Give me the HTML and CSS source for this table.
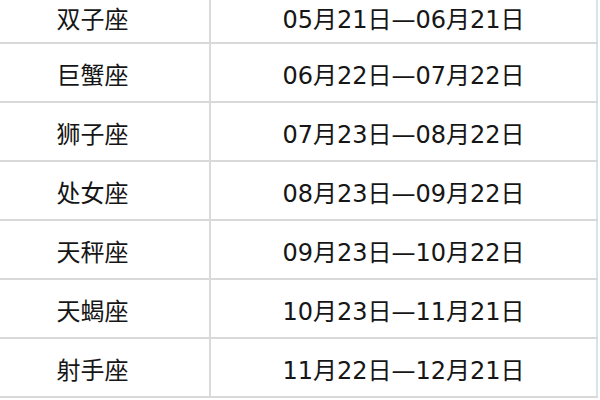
FILE: index.html
```html
<!DOCTYPE html>
<html lang="zh-CN">
<head>
<meta charset="utf-8">
<link rel="stylesheet" href="styles.css">
</head>
<body>
<div class="table">
  <div class="row first"><div class="cell name">双子座</div><div class="cell date">05月21日—06月21日</div></div>
  <div class="row"><div class="cell name">巨蟹座</div><div class="cell date">06月22日—07月22日</div></div>
  <div class="row"><div class="cell name">狮子座</div><div class="cell date">07月23日—08月22日</div></div>
  <div class="row"><div class="cell name">处女座</div><div class="cell date">08月23日—09月22日</div></div>
  <div class="row"><div class="cell name">天秤座</div><div class="cell date">09月23日—10月22日</div></div>
  <div class="row"><div class="cell name">天蝎座</div><div class="cell date">10月23日—11月21日</div></div>
  <div class="row"><div class="cell name">射手座</div><div class="cell date">11月22日—12月21日</div></div>
</div>
</body>
</html>
```

FILE: styles.css
```css
html, body {
  margin: 0;
  padding: 0;
  background: #ffffff;
  overflow: hidden;
}

.table {
  margin-left: -24px;
  width: 622px;
  font-family: "DejaVu Sans", "Noto Sans CJK SC", sans-serif;
  font-size: 24px;
  color: #161616;
}

.row {
  display: grid;
  grid-template-columns: 235px 387px;
  height: 59px;
  box-sizing: border-box;
  border-bottom: 2px solid #d9d9d9;
}

.row.first {
  height: 44px;
}

.row.first .cell {
  padding-top: 0;
  padding-bottom: 7px;
}

.cell {
  display: flex;
  align-items: center;
  justify-content: center;
  padding-top: 2px;
}

.name {
  border-right: 2px solid #dadada;
  font-family: "Noto Sans CJK SC", sans-serif;
}

.date {
  border-right: 2px solid #d3e5e8;
}
```
